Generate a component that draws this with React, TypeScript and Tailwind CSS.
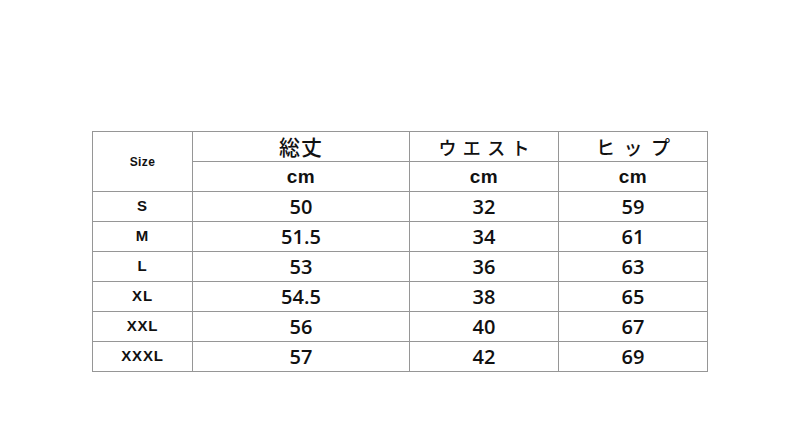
const rows = [
  { size: 'S', length: '50', waist: '32', hip: '59' },
  { size: 'M', length: '51.5', waist: '34', hip: '61' },
  { size: 'L', length: '53', waist: '36', hip: '63' },
  { size: 'XL', length: '54.5', waist: '38', hip: '65' },
  { size: 'XXL', length: '56', waist: '40', hip: '67' },
  { size: 'XXXL', length: '57', waist: '42', hip: '69' },
]

const cell = 'bg-white flex items-center justify-center text-[#111]'
const num = `${cell} font-['Open_Sans',sans-serif] font-semibold text-[20px] leading-none`
const jp = `${cell} font-['Noto_Sans_CJK_JP',sans-serif] font-medium leading-none`
const unit = `${cell} font-['Liberation_Sans',Arial,sans-serif] font-bold text-[19px] tracking-[0.5px] leading-none`

export default function App() {
  return (
    <div className="w-[800px] h-[446px] bg-white pl-[92px] pt-[131px]">
      <div className="grid w-[616px] grid-cols-[99px_216px_148px_148px] auto-rows-[29px] gap-px p-px bg-[#969696]">
        <div className={`${cell} row-span-2 font-['Liberation_Sans',Arial,sans-serif] font-bold text-[12px] tracking-[0.4px]`}>
          Size
        </div>
        <div className={`${jp} text-[21px] tracking-[1px]`}>総丈</div>
        <div className={`${jp} text-[18px] tracking-[0.35em] pl-[0.35em]`}>ウエスト</div>
        <div className={`${jp} text-[19px] tracking-[0.45em] pl-[0.45em]`}>ヒップ</div>
        <div className={unit}>cm</div>
        <div className={unit}>cm</div>
        <div className={unit}>cm</div>
        {rows.map((r) => (
          <div key={r.size} className="contents">
            <div className={`${cell} font-['Liberation_Sans',Arial,sans-serif] font-bold text-[15px] tracking-[0.8px]`}>
              {r.size}
            </div>
            <div className={num}>{r.length}</div>
            <div className={num}>{r.waist}</div>
            <div className={num}>{r.hip}</div>
          </div>
        ))}
      </div>
    </div>
  )
}
